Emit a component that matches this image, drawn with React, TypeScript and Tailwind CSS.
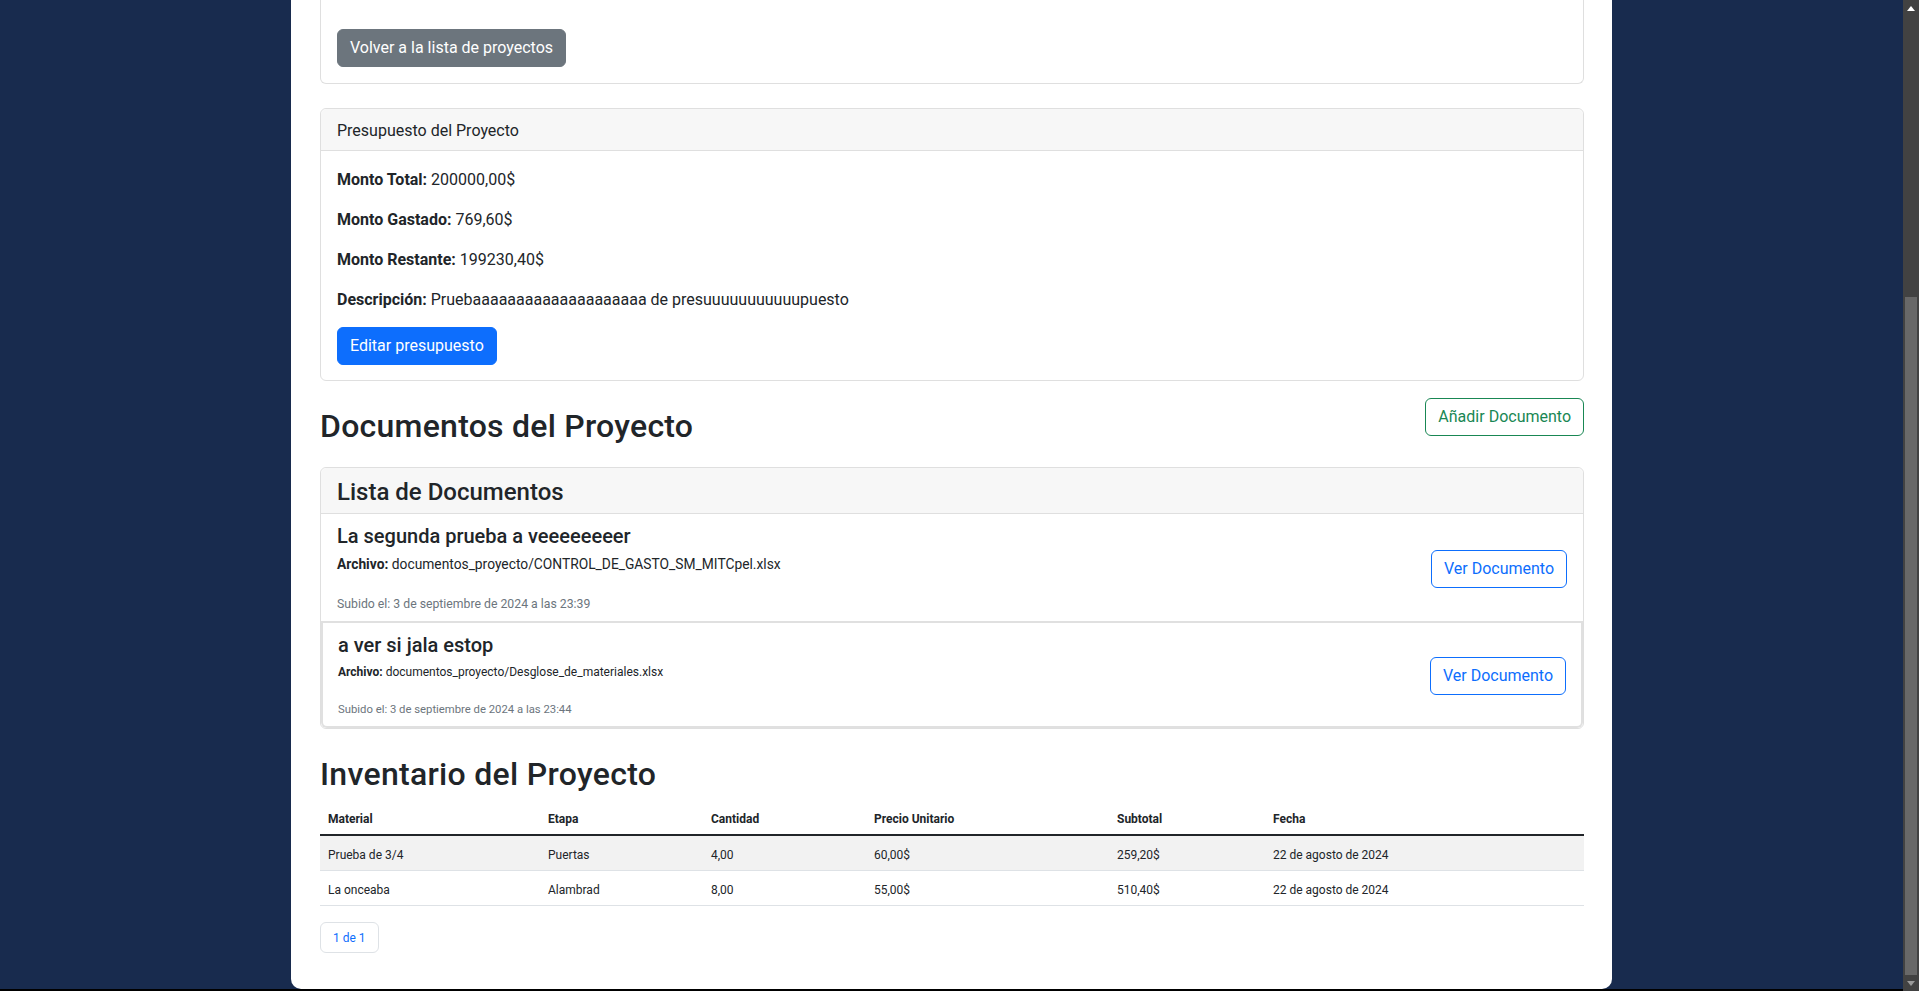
import React from "react";

const documentos = [
  {
    titulo: "La segunda prueba a veeeeeeeer",
    archivo: "documentos_proyecto/CONTROL_DE_GASTO_SM_MITCpel.xlsx",
    subido: "Subido el: 3 de septiembre de 2024 a las 23:39",
  },
  {
    titulo: "a ver si jala estop",
    archivo: "documentos_proyecto/Desglose_de_materiales.xlsx",
    subido: "Subido el: 3 de septiembre de 2024 a las 23:44",
  },
];

const inventario = [
  { material: "Prueba de 3/4", etapa: "Puertas", cantidad: "4,00", precio: "60,00$", subtotal: "259,20$", fecha: "22 de agosto de 2024" },
  { material: "La onceaba", etapa: "Alambrad", cantidad: "8,00", precio: "55,00$", subtotal: "510,40$", fecha: "22 de agosto de 2024" },
];

const Scrollbar = () => (
  <div className="flex w-[16px] shrink-0 flex-col bg-[#424242]">
    <div className="flex h-[17px] items-center justify-center">
      <svg width="8" height="5" viewBox="0 0 8 5">
        <path d="M0 5 L4 0 L8 5 Z" fill="#ffffff" />
      </svg>
    </div>
    <div className="h-[280px]" />
    <div className="mx-[2px] h-[678px] bg-[#686868]" />
    <div className="flex-1" />
    <div className="flex h-[16px] items-center justify-center">
      <svg width="8" height="5" viewBox="0 0 8 5">
        <path d="M0 0 L4 5 L8 0 Z" fill="#9a9a9a" />
      </svg>
    </div>
  </div>
);

export default function App() {
  return (
    <div className="flex h-[991px] w-full overflow-hidden bg-[#182b4e] font-[Roboto,sans-serif] text-[#212529]">
      <div className="flex flex-1 flex-col">
        <div className="h-[989px] overflow-hidden">
          <main className="mx-auto h-[989px] w-[1321px] rounded-b-[10px] bg-white pl-[29px] pr-[28px]">
            {/* tarjeta superior (cortada por el scroll) */}
            <div className="rounded-b-[6px] border border-t-0 border-[#dfdfdf] px-4 pb-4 pt-[29px]">
              <button className="rounded-[6px] border border-[#6c757d] bg-[#6c757d] px-3 py-1.5 text-base leading-6 text-white">
                Volver a la lista de proyectos
              </button>
            </div>

            {/* presupuesto */}
            <div className="mt-6 rounded-[6px] border border-[#dfdfdf]">
              <div className="rounded-t-[6px] border-b border-[#dfdfdf] bg-[#f7f7f7] px-4 pb-[7px] pt-[10px] text-base leading-6">
                Presupuesto del Proyecto
              </div>
              <div className="px-4 pb-[15px] pt-4 text-base leading-6">
                <p className="mb-[15px] pt-[1px]"><strong className="font-bold">Monto Total:</strong> 200000,00$</p>
                <p className="mb-[15px] pt-[1px]"><strong className="font-bold">Monto Gastado:</strong> 769,60$</p>
                <p className="mb-[15px] pt-[1px]"><strong className="font-bold">Monto Restante:</strong> 199230,40$</p>
                <p className="mb-[15px] pt-[1px]">
                  <strong className="font-bold">Descripción:</strong> Pruebaaaaaaaaaaaaaaaaaaaa de presuuuuuuuuuuupuesto
                </p>
                <button className="rounded-[6px] border border-[#0d6efd] bg-[#0d6efd] px-3 py-1.5 text-base leading-6 text-white">
                  Editar presupuesto
                </button>
              </div>
            </div>

            {/* documentos */}
            <div className="mt-4 flex items-start justify-between">
              <h2 className="mb-[22px] mt-[10px] text-[32px] font-medium leading-[38px] tracking-[0.25px]">Documentos del Proyecto</h2>
              <button className="mt-[1px] rounded-[6px] border border-[#198754] px-3 py-1.5 text-base leading-6 text-[#198754]">
                Añadir Documento
              </button>
            </div>

            <div className="rounded-[6px] border border-[#dfdfdf]">
              <div className="rounded-t-[6px] border-b border-[#dfdfdf] bg-[#f7f7f7] px-4 pb-[6px] pt-[10px]">
                <h4 className="text-2xl font-medium leading-[29px]">Lista de Documentos</h4>
              </div>

              <div className="flex items-center justify-between border-b-2 border-[#e0e0e0] px-4 pb-2 pt-[10px]">
                <div>
                  <h5 className="text-xl font-medium leading-6">{documentos[0].titulo}</h5>
                  <p className="mt-[6px] text-[13.8px] leading-[21px]">
                    <strong className="font-bold">Archivo:</strong> {documentos[0].archivo}
                  </p>
                  <p className="mt-[20px] text-[12.25px] leading-[18px] text-[#6c757d]">{documentos[0].subido}</p>
                </div>
                <button className="rounded-[6px] border border-[#0d6efd] px-3 py-1.5 text-base leading-6 text-[#0d6efd]">
                  Ver Documento
                </button>
              </div>

              <div className="flex items-center justify-between rounded-b-[6px] border-x-2 border-b-2 border-[#e0e0e0] px-[15px] pb-[8px] pt-[10px]">
                <div>
                  <h5 className="text-xl font-medium leading-6">{documentos[1].titulo}</h5>
                  <p className="mt-[6px] text-[12px] leading-[19px]">
                    <strong className="font-bold">Archivo:</strong> {documentos[1].archivo}
                  </p>
                  <p className="mt-[20px] text-[11.3px] leading-4 text-[#6c757d]">{documentos[1].subido}</p>
                </div>
                <button className="rounded-[6px] border border-[#0d6efd] px-3 py-1.5 text-base leading-6 text-[#0d6efd]">
                  Ver Documento
                </button>
              </div>
            </div>

            {/* inventario */}
            <h2 className="mb-[7px] mt-[26px] text-[32px] font-medium leading-[38px] tracking-[0.3px]">Inventario del Proyecto</h2>
            <table className="w-full table-fixed border-collapse text-[12px] leading-[18px]">
              <thead>
                <tr className="border-b-2 border-[#212529] text-left">
                  <th className="w-[220px] px-2 pb-[6px] pt-[10px] font-bold">Material</th>
                  <th className="w-[163px] px-2 pb-[6px] pt-[10px] font-bold">Etapa</th>
                  <th className="w-[163px] px-2 pb-[6px] pt-[10px] font-bold">Cantidad</th>
                  <th className="w-[243px] px-2 pb-[6px] pt-[10px] font-bold">Precio Unitario</th>
                  <th className="w-[156px] px-2 pb-[6px] pt-[10px] font-bold">Subtotal</th>
                  <th className="px-2 pb-[6px] pt-[10px] font-bold">Fecha</th>
                </tr>
              </thead>
              <tbody>
                {inventario.map((r, i) => (
                  <tr key={r.material} className={i % 2 === 0 ? "border-b border-[#dee2e6] bg-[#f2f2f2]" : "border-b border-[#dee2e6]"}>
                    <td className="px-2 pb-[6px] pt-[10px]">{r.material}</td>
                    <td className="px-2 pb-[6px] pt-[10px]">{r.etapa}</td>
                    <td className="px-2 pb-[6px] pt-[10px]">{r.cantidad}</td>
                    <td className="px-2 pb-[6px] pt-[10px]">{r.precio}</td>
                    <td className="px-2 pb-[6px] pt-[10px]">{r.subtotal}</td>
                    <td className="px-2 pb-[6px] pt-[10px]">{r.fecha}</td>
                  </tr>
                ))}
              </tbody>
            </table>

            <div className="mt-4 flex">
              <span className="flex h-[31px] items-center rounded-[6px] border border-[#dee2e6] px-3 text-[12px] text-[#0d6efd]">
                1 de 1
              </span>
            </div>
          </main>
        </div>
        <div className="h-[2px] bg-black" />
      </div>
      <Scrollbar />
    </div>
  );
}
